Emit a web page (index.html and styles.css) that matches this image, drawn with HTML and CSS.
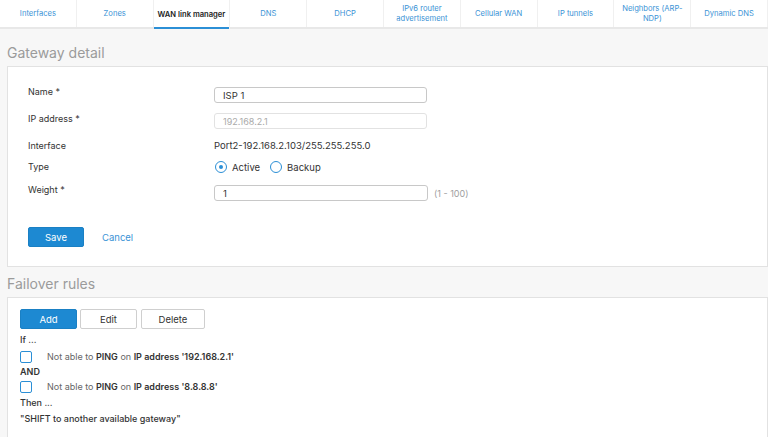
FILE: index.html
```html
<!DOCTYPE html>
<html>
<head>
<meta charset="utf-8">
<link rel="stylesheet" href="styles.css">
</head>
<body>
<nav class="tabs">
  <div class="tab">Interfaces</div>
  <div class="tab">Zones</div>
  <div class="tab active">WAN link manager</div>
  <div class="tab">DNS</div>
  <div class="tab">DHCP</div>
  <div class="tab">IPv6 router advertisement</div>
  <div class="tab">Cellular WAN</div>
  <div class="tab">IP tunnels</div>
  <div class="tab">Neighbors (ARP-NDP)</div>
  <div class="tab">Dynamic DNS</div>
</nav>

<h2 class="section-title first">Gateway detail</h2>
<section class="panel gateway">
  <div class="row r1">
    <label class="lbl">Name *</label>
    <div class="field"><input class="input" type="text" value="ISP 1"></div>
  </div>
  <div class="row r2">
    <label class="lbl">IP address *</label>
    <div class="field"><input class="input disabled" type="text" value="192.168.2.1" disabled></div>
  </div>
  <div class="row r3">
    <label class="lbl">Interface</label>
    <div class="value">Port2-192.168.2.103/255.255.255.0</div>
  </div>
  <div class="row r4">
    <label class="lbl">Type</label>
    <div class="radios">
      <span class="radio checked"></span><span class="rtext">Active</span>
      <span class="radio"></span><span class="rtext">Backup</span>
    </div>
  </div>
  <div class="row r5">
    <label class="lbl">Weight *</label>
    <div class="field"><input class="input" type="text" value="1"><span class="hint">(1 - 100)</span></div>
  </div>
  <div class="actions">
    <button class="btn primary save">Save</button>
    <a class="link">Cancel</a>
  </div>
</section>

<h2 class="section-title second">Failover rules</h2>
<section class="panel rules">
  <div class="toolbar">
    <button class="btn primary tb add">Add</button>
    <button class="btn secondary tb edit">Edit</button>
    <button class="btn secondary tb del">Delete</button>
  </div>
  <div class="cond-head">If ...</div>
  <div class="cond first"><span class="check"></span><span class="ctext">Not able to <b>PING</b> on <b>IP address '192.168.2.1'</b></span></div>
  <div class="cond-and">AND</div>
  <div class="cond second"><span class="check"></span><span class="ctext">Not able to <b>PING</b> on <b>IP address '8.8.8.8'</b></span></div>
  <div class="cond-head then">Then ...</div>
  <div class="result">"SHIFT to another available gateway"</div>
</section>
</body>
</html>
```

FILE: styles.css
```css
html, body {
  margin: 0;
  padding: 0;
}
body {
  background: #f7f7f7;
  font-family: Inter, "Noto Sans", sans-serif;
  font-size: 9px;
  color: #333;
  width: 768px;
  height: 437px;
  overflow: hidden;
}

.tabs {
  display: grid;
  grid-template-columns: repeat(10, 1fr);
  height: 27px;
  background: #fff;
  border-bottom: 2px solid #e8e8e8;
}
.tab {
  display: flex;
  align-items: center;
  justify-content: center;
  text-align: center;
  font-size: 7.6px;
  line-height: 10px;
  color: #3b93d6;
  border-right: 1px solid #f0f0f0;
  padding: 0 6px;
}
.tab.active {
  color: #222;
  font-weight: 600;
  white-space: nowrap;
  padding: 0 2px;
  box-shadow: inset 0 -2px 0 #2b8fd6;
  margin-bottom: -2px;
}

.section-title {
  margin: 0;
  font-weight: 400;
  font-size: 14px;
  line-height: 20px;
  color: #9b9b9b;
  padding: 0 7px 3px;
}
.section-title.first { padding-top: 14px; }
.section-title.second { padding-top: 7px; }

.panel {
  margin-left: 7px;
  background: #fff;
  border: 1px solid #e2e2e2;
}

.gateway {
  padding: 18px 20px 19px;
}
.row {
  display: flex;
  align-items: flex-start;
}
.lbl {
  width: 186px;
  line-height: 14px;
  flex: none;
}
.r1 { height: 27px; }
.r2 { height: 27px; }
.r3 { height: 21px; }
.r4 { height: 23px; }
.r5 { height: 19px; }
.field {
  display: flex;
  align-items: center;
  margin-top: 2px;
}
.r2 .field { margin-top: 1px; }
.input {
  box-sizing: border-box;
  width: 213px;
  height: 16px;
  border: 1px solid #c8c8c8;
  border-radius: 3px;
  padding: 0 8px;
  font-family: inherit;
  font-size: 9.5px;
  color: #333;
  background: #fff;
  outline: none;
}
.r5 .input { width: 214px; }
.input.disabled {
  border-color: #e2e2e2;
  color: #aaa;
  font-size: 9px;
}
.hint {
  margin-left: 6px;
  color: #a0a0a0;
  font-size: 9px;
}
.value {
  line-height: 14px;
  font-size: 9.5px;
}
.radios {
  display: flex;
  align-items: center;
  height: 14px;
  font-size: 9.5px;
}
.radio {
  box-sizing: border-box;
  width: 12px;
  height: 12px;
  border: 1.5px solid #2b8fd6;
  border-radius: 50%;
  display: inline-flex;
  align-items: center;
  justify-content: center;
  margin-left: 1px;
}
.radio.checked::after {
  content: "";
  width: 4px;
  height: 4px;
  border-radius: 50%;
  background: #2b8fd6;
}
.rtext {
  margin-left: 5px;
  margin-right: 9px;
}

.actions {
  display: flex;
  align-items: center;
  margin-top: 25px;
}
.btn {
  box-sizing: border-box;
  height: 20px;
  font-family: inherit;
  font-size: 9.5px;
  border-radius: 2px;
  padding: 0;
  cursor: pointer;
}
.btn.primary {
  background: #1d89d2;
  color: #fff;
  border: 1px solid #1a80c4;
}
.btn.secondary {
  background: #fff;
  color: #333;
  border: 1px solid #cfcfcf;
}
.save { width: 56px; }
.link {
  margin-left: 18px;
  color: #3b93d6;
  font-size: 9.5px;
}

.rules {
  padding: 11px 12px 0;
  height: 140px;
}
.toolbar {
  display: flex;
  gap: 3px;
}
.tb.add { width: 57px; }
.tb.edit { width: 57px; }
.tb.del { width: 64px; margin-left: 1px; }

.cond-head {
  font-weight: 500;
  line-height: 14px;
  margin-top: 4px;
}
.cond {
  display: flex;
  align-items: center;
  height: 15px;
}
.cond.first { margin-top: 2px; }
.cond.second { margin-top: 0; }
.check {
  box-sizing: border-box;
  width: 12px;
  height: 12px;
  border: 1.5px solid #2b8fd6;
  border-radius: 2px;
  flex: none;
}
.ctext {
  margin-left: 15px;
  color: #666;
}
.ctext b {
  color: #333;
  font-weight: 600;
}
.cond-and {
  font-weight: 600;
  line-height: 14px;
  margin-top: 1px;
}
.cond-head.then {
  margin-top: 2px;
}
.result {
  font-weight: 500;
  line-height: 14px;
  margin-top: 2px;
}
```
